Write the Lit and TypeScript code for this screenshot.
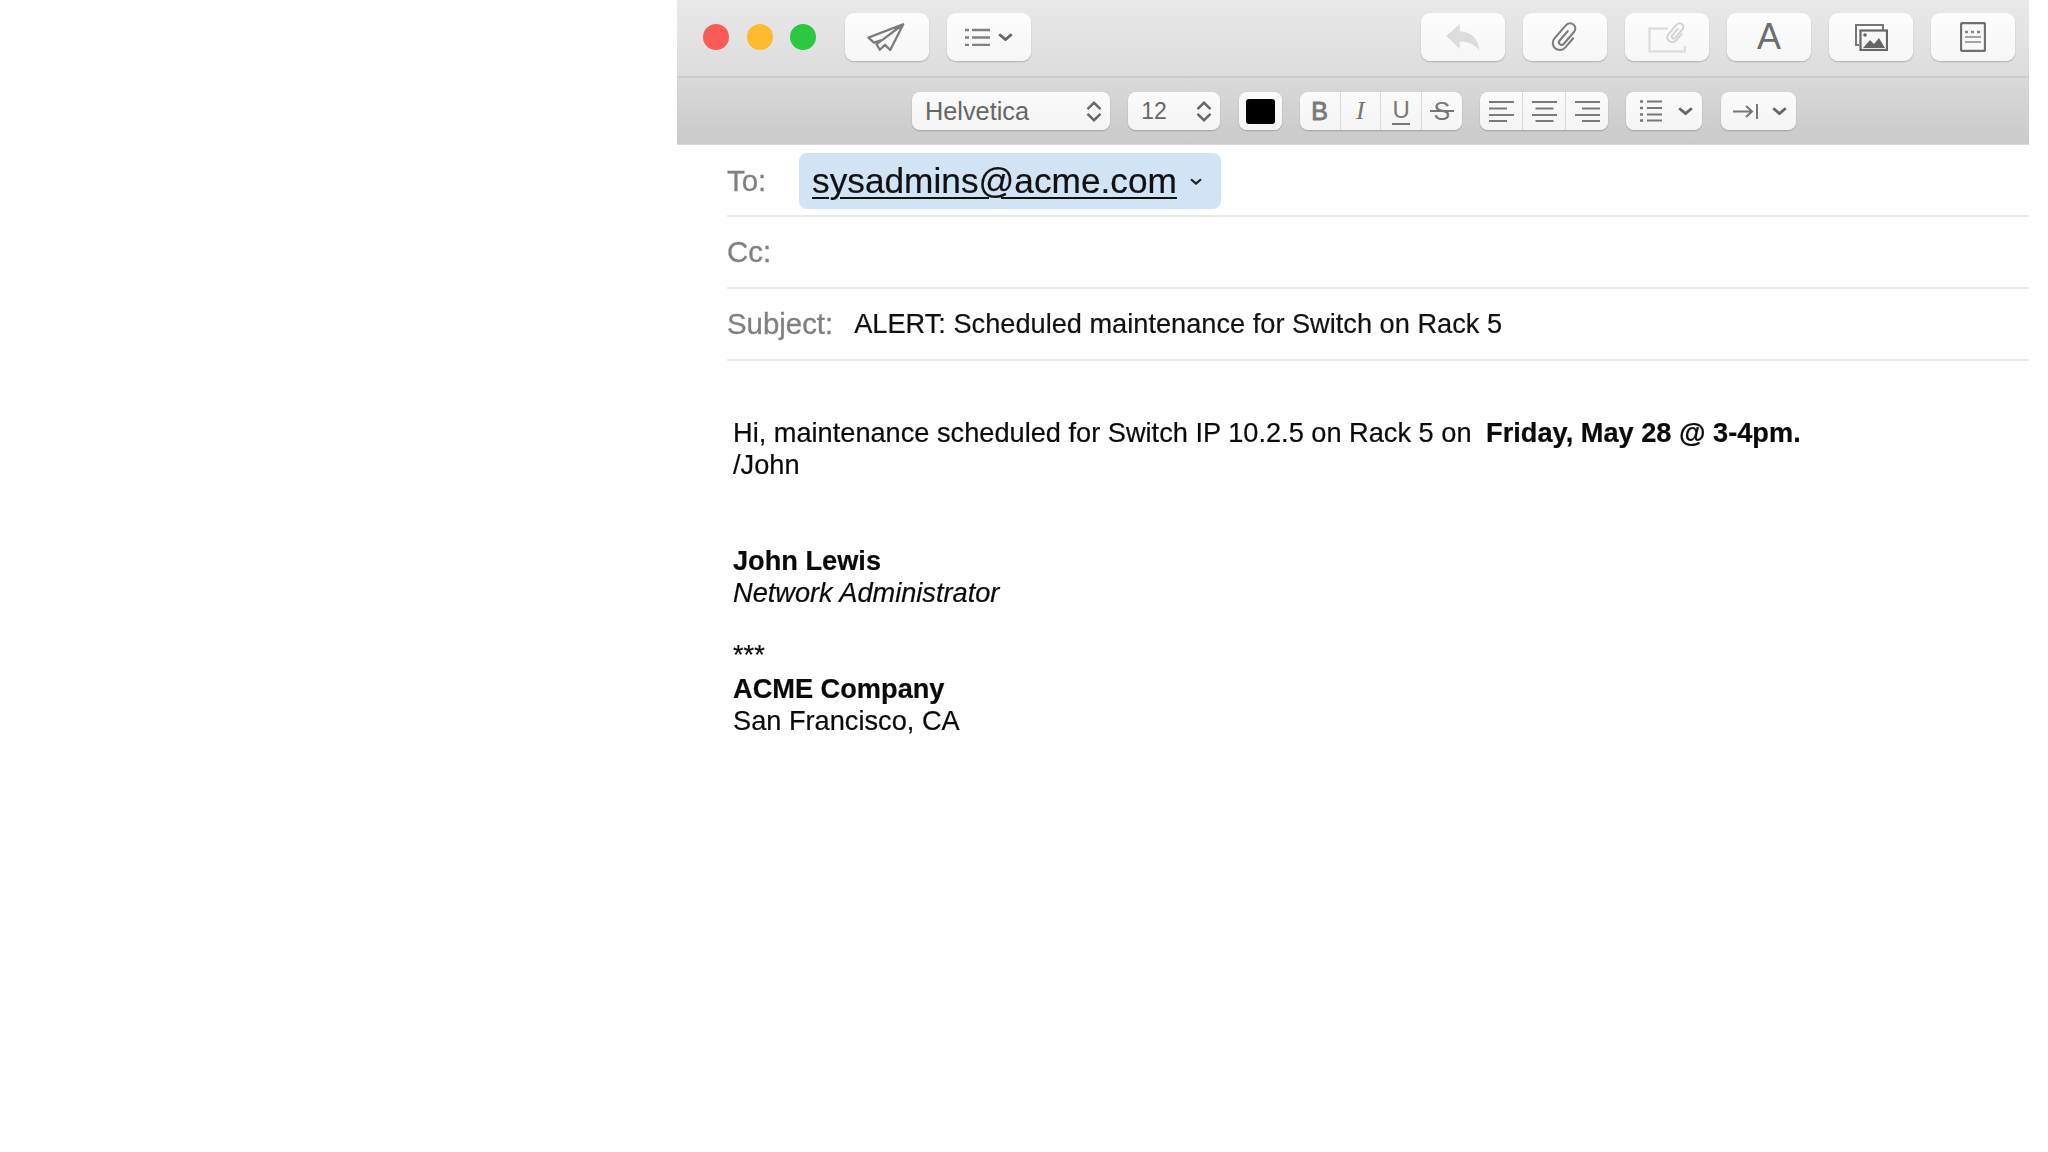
import { LitElement, html, css, svg } from "lit";
import { customElement } from "lit/decorators.js";

const chevron = (w = 15, h = 8, color = "#666") => html`<svg class="chev" width=${w} height=${h} viewBox="0 0 15 8"><path d="M1.2 1.2 7.5 6.6 13.8 1.2" fill="none" stroke=${color} stroke-width="2.8"/></svg>`;
const updown = html`<svg width="16" height="21" viewBox="0 0 16 21"><path d="M1.500 8.200 8 1.800 14.500 8.200M1.500 12.800 8 19.200 14.500 12.800" fill="none" stroke="#666" stroke-width="2.400"/></svg>`;

const clip = (cx: number, cy: number, s: number, color: string, w: number) =>
  svg`<path transform="translate(${cx} ${cy}) rotate(41) scale(${s}) translate(-10 -17)" d="M8 10V24a3 3 0 0 0 6 0V6a6 6 0 0 0-12 0V26a8 8 0 0 0 16 0V12" fill="none" stroke=${color} stroke-width=${w} stroke-linecap="round"/>`;

const sendIcon = html`<svg class="send" width="41" height="30" viewBox="135 65 125 92"><path d="M252 72 145 113 162 128 188 120 170 133 180 150 196 135 212 151ZM252 72 188 120" fill="none" stroke="#7c7c7c" stroke-width="7" stroke-linejoin="round"/></svg>`;
const listIcon = html`<svg width="25" height="18" viewBox="0 0 25 18"><path d="M0 2h4M0 9.500h4M0 17h4" stroke="#808080" stroke-width="2.600"/><path d="M7 2h18M7 9.500h18M7 17h18" stroke="#808080" stroke-width="2.600"/></svg>`;
const replyIcon = html`<svg width="35" height="28" viewBox="85 65 105 86"><path d="M85 105 126 68V90C165 92 185 118 186 150 172 130 150 122 126 122V145Z" fill="#dcdcdc"/></svg>`;
const clipIcon = html`<svg width="30" height="32" viewBox="0 0 30 32">${clip(15, 16, 0.88, "#7c7c7c", 2.4)}</svg>`;
const photoAttachIcon = html`<svg width="38" height="32" viewBox="0 0 38 32"><path d="M20 7.500H1.500V30.500H37V25" fill="none" stroke="#dedede" stroke-width="2.400"/>${clip(28, 12, 0.62, "#d4d4d4", 3.2)}</svg>`;
const imageIcon = html`<svg width="33" height="27" viewBox="0 0 33 27"><path d="M4 21H1V1H28V6" fill="none" stroke="#777" stroke-width="2"/><rect x="5.500" y="6.500" width="26.500" height="19.500" fill="#f8f8f8" stroke="#666" stroke-width="2.200"/><circle cx="10" cy="11" r="1.800" fill="#666"/><path d="M8 24 15 16 19 20 24 14 30 24Z" fill="#666"/></svg>`;
const noteIcon = html`<svg width="26" height="30" viewBox="0 0 26 30"><rect x="1" y="1" width="24" height="28" rx="1.500" fill="none" stroke="#707070" stroke-width="2.300"/><path d="M5 10h3M11 10h3M17 10h3" stroke="#888" stroke-width="2.400"/><path d="M5 15h16M5 20h16" stroke="#888" stroke-width="1.600"/></svg>`;

const alignIcon = (kind: "l" | "c" | "r") => {
  const short = 18;
  const full = 25;
  const x = (w: number) => (kind === "l" ? 0 : kind === "c" ? (full - w) / 2 : full - w);
  const line = (y: number, w: number) => `M${x(w)} ${y}h${w}`;
  const d = [line(1, full), line(7.5, short), line(14, full), line(20, short)].join("");
  return html`<svg width="25" height="21" viewBox="0 0 25 21"><path d=${d} stroke="#7a7a7a" stroke-width="2" fill="none"/></svg>`;
};
const bulletIcon = html`<svg width="22" height="22" viewBox="0 0 22 22"><path d="M0 1.500h3M0 8h3M0 14.500h3M0 20.500h3" stroke="#777" stroke-width="2.400"/><path d="M7 1.500h15M7 8h15M7 14.500h15M7 20.500h15" stroke="#777" stroke-width="2"/></svg>`;
const indentIcon = html`<svg width="25" height="15" viewBox="0 0 25 15"><path d="M0 7.500h19M13 2 19 7.500 13 13" fill="none" stroke="#777" stroke-width="2"/><path d="M24 0V15" stroke="#777" stroke-width="2"/></svg>`;

@customElement("app-root")
export class AppRoot extends LitElement {
  static styles = css`
    :host {
      display: block;
      width: 2048px;
      height: 1152px;
      background: #fff;
      font-family: "Liberation Sans", Arial, sans-serif;
      overflow: hidden;
    }
    .window {
      margin-left: 677px;
      width: 1352px;
      filter: blur(0.45px);
    }
    .toolbar {
      box-sizing: border-box;
      height: 78px;
      display: flex;
      align-items: flex-start;
      padding: 13px 14px 0 26px;
      background: linear-gradient(#e9e9e9, #dcdcdc);
      border-bottom: 2px solid #cbcbcb;
    }
    .lights {
      display: flex;
      gap: 17.5px;
      height: 48px;
      align-items: center;
      margin-right: 28.5px;
    }
    .light {
      width: 26px;
      height: 26px;
      border-radius: 50%;
    }
    .red { background: #fc5a57; }
    .yellow { background: #fdbb2d; }
    .green { background: #2cc840; }
    .group {
      display: flex;
      gap: 18px;
    }
    .spacer { flex: 1; }
    .btn {
      box-sizing: border-box;
      width: 84px;
      height: 48px;
      display: flex;
      align-items: center;
      justify-content: center;
      border-radius: 9px;
      background: linear-gradient(#fdfdfd, #f6f6f6);
      box-shadow: 0 1px 1.5px rgba(0, 0, 0, 0.22);
    }
    .list-btn { gap: 8px; }
    .send { margin-right: 2px; }
    .a-glyph {
      font-size: 36px;
      line-height: 36px;
      color: #6e6e6e;
    }
    .format {
      box-sizing: border-box;
      height: 67px;
      display: flex;
      align-items: flex-start;
      gap: 18.25px;
      padding: 14px 0 0 235px;
      background: linear-gradient(#d9d9d9, #cacaca);
      border-bottom: 1px solid #d9d9d9;
    }
    .ctl {
      box-sizing: border-box;
      height: 38px;
      display: flex;
      align-items: center;
      border-radius: 8px;
      background: linear-gradient(#fbfbfb, #f4f4f4);
      box-shadow: 0 1px 1.5px rgba(0, 0, 0, 0.22);
      color: #666;
      overflow: hidden;
    }
    .select {
      justify-content: space-between;
      padding: 0 8px 0 13px;
      font-size: 25.3px;
    }
    .font { width: 198px; }
    .size { width: 92px; font-size: 23px; }
    .color { width: 43px; justify-content: center; }
    .swatch {
      width: 29px;
      height: 25px;
      border-radius: 3px;
      background: #000;
    }
    .seg {
      height: 100%;
      flex: 1;
      display: flex;
      align-items: center;
      justify-content: center;
      border-right: 1px solid #dadada;
    }
    .seg:last-child { border-right: 0; }
    .bius { width: 162px; }
    .aligns { width: 128px; }
    .bold { font-size: 25px; color: #7a7a7a; -webkit-text-stroke: 0.9px #7a7a7a; }
    .italic { font-family: "Liberation Serif", serif; font-style: italic; font-size: 26px; color: #777; }
    .under { font-size: 24px; color: #777; line-height: 24px; border-bottom: 2px solid #777; padding: 0 0 1px; }
    .strike { position: relative; font-size: 25px; color: #777; }
    .strike::after {
      content: "";
      position: absolute;
      left: -4px;
      right: -4px;
      top: 13px;
      height: 2px;
      background: #777;
    }
    .drop { justify-content: space-between; }
    .bullets { width: 76px; padding: 0 9px 0 14px; }
    .indent { width: 75px; padding: 0 9px 0 12px; }
    .fields { padding-left: 50px; }
    .row {
      box-sizing: border-box;
      height: 72px;
      display: flex;
      align-items: center;
      border-bottom: 2px solid #e9e9e9;
      font-size: 29.4px;
      color: #808080;
      -webkit-text-stroke: 0.3px #808080;
    }
    .first { padding-top: 2px; }
    .to-label { width: 72px; }
    .chip {
      box-sizing: border-box;
      width: 422px;
      height: 56px;
      display: flex;
      align-items: center;
      gap: 13px;
      padding-left: 13px;
      border-radius: 8px;
      background: #d0e4f6;
      color: #111;
      font-size: 35.25px;
      -webkit-text-stroke: 0.2px #111;
    }
    .chip u { text-underline-offset: 4px; text-decoration-thickness: 2px; }
    .subject { color: #111; font-size: 27.2px; margin-left: 21px; -webkit-text-stroke: 0.2px #111; }
    .body {
      padding: 56px 0 0 56px;
      font-size: 27.2px;
      line-height: 32px;
      color: #0a0a0a;
      -webkit-text-stroke: 0.2px #0a0a0a;
    }
    .body div { min-height: 32px; }
    .stars { margin: -2px 0 2px; }
    .gap-b { margin-left: 7px; }
    b { font-weight: 700; }
    i { font-style: italic; }
  `;

  render() {
    return html`
      <div class="window">
        <div class="toolbar">
          <div class="lights">
            <div class="light red"></div>
            <div class="light yellow"></div>
            <div class="light green"></div>
          </div>
          <div class="group">
            <div class="btn">${sendIcon}</div>
            <div class="btn list-btn">${listIcon}${chevron()}</div>
          </div>
          <div class="spacer"></div>
          <div class="group">
            <div class="btn">${replyIcon}</div>
            <div class="btn">${clipIcon}</div>
            <div class="btn">${photoAttachIcon}</div>
            <div class="btn"><span class="a-glyph">A</span></div>
            <div class="btn">${imageIcon}</div>
            <div class="btn">${noteIcon}</div>
          </div>
        </div>
        <div class="format">
          <div class="ctl select font"><span>Helvetica</span>${updown}</div>
          <div class="ctl select size"><span>12</span>${updown}</div>
          <div class="ctl color"><div class="swatch"></div></div>
          <div class="ctl bius">
            <div class="seg"><span class="bold">B</span></div>
            <div class="seg"><span class="italic">I</span></div>
            <div class="seg"><span class="under">U</span></div>
            <div class="seg"><span class="strike">S</span></div>
          </div>
          <div class="ctl aligns">
            <div class="seg">${alignIcon("l")}</div>
            <div class="seg">${alignIcon("c")}</div>
            <div class="seg">${alignIcon("r")}</div>
          </div>
          <div class="ctl drop bullets">${bulletIcon}${chevron()}</div>
          <div class="ctl drop indent">${indentIcon}${chevron()}</div>
        </div>
        <div class="fields">
          <div class="row first">
            <span class="to-label">To:</span>
            <div class="chip"><u>sysadmins@acme.com</u>${chevron(12, 7, "#222")}</div>
          </div>
          <div class="row"><span>Cc:</span></div>
          <div class="row">
            <span>Subject:</span>
            <span class="subject">ALERT: Scheduled maintenance for Switch on Rack 5</span>
          </div>
        </div>
        <div class="body">
          <div>Hi, maintenance scheduled for Switch IP 10.2.5 on Rack 5 on <b class="gap-b">Friday, May 28 @ 3-4pm.</b></div>
          <div>/John</div>
          <div></div>
          <div></div>
          <div><b>John Lewis</b></div>
          <div><i>Network Administrator</i></div>
          <div></div>
          <div class="stars">***</div>
          <div><b>ACME Company</b></div>
          <div>San Francisco, CA</div>
        </div>
      </div>
    `;
  }
}
